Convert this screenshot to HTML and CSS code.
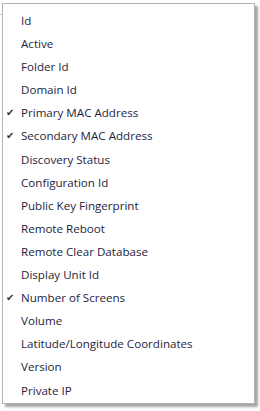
FILE: index.html
```html
<html lang="en">
<head>
    <meta charset="UTF-8">
    <title>Columns</title>
    <link rel="stylesheet" href="styles.css">
</head>
<body>
    <div class="backline"></div>
    <ul class="menu">
        <li class="item">Id</li>
        <li class="item">Active</li>
        <li class="item">Folder Id</li>
        <li class="item">Domain Id</li>
        <li class="item on">Primary MAC Address</li>
        <li class="item on">Secondary MAC Address</li>
        <li class="item">Discovery Status</li>
        <li class="item">Configuration Id</li>
        <li class="item">Public Key Fingerprint</li>
        <li class="item">Remote Reboot</li>
        <li class="item">Remote Clear Database</li>
        <li class="item">Display Unit Id</li>
        <li class="item on">Number of Screens</li>
        <li class="item">Volume</li>
        <li class="item">Latitude/Longitude Coordinates</li>
        <li class="item">Version</li>
        <li class="item">Private IP</li>
    </ul>
</body>
</html>
```

FILE: styles.css
```css
body {
    margin: 0;
    background: #fff;
    font-family: "Open Sans", "Noto Sans", sans-serif;
}

.backline {
    position: absolute;
    top: 14px;
    left: 0;
    width: 3px;
    height: 1px;
    background: #c8c8c8;
}

.menu {
    list-style: none;
    margin: 3px 0 0 2px;
    padding: 5px 0 0 0;
    width: 251px;
    height: 394px;
    border: 1px solid #b4b4b4;
    background: #fff;
    box-shadow: 3px 3px 2px rgba(0, 0, 0, 0.35);
}

.item {
    position: relative;
    height: 23.1px;
    line-height: 23.1px;
    padding-left: 18px;
    font-size: 11.6px;
    color: #1e1e3c;
}

.item.on::before {
    content: "\2714";
    position: absolute;
    left: 3px;
    top: 0;
    font-size: 10px;
    color: #333;
}
```
